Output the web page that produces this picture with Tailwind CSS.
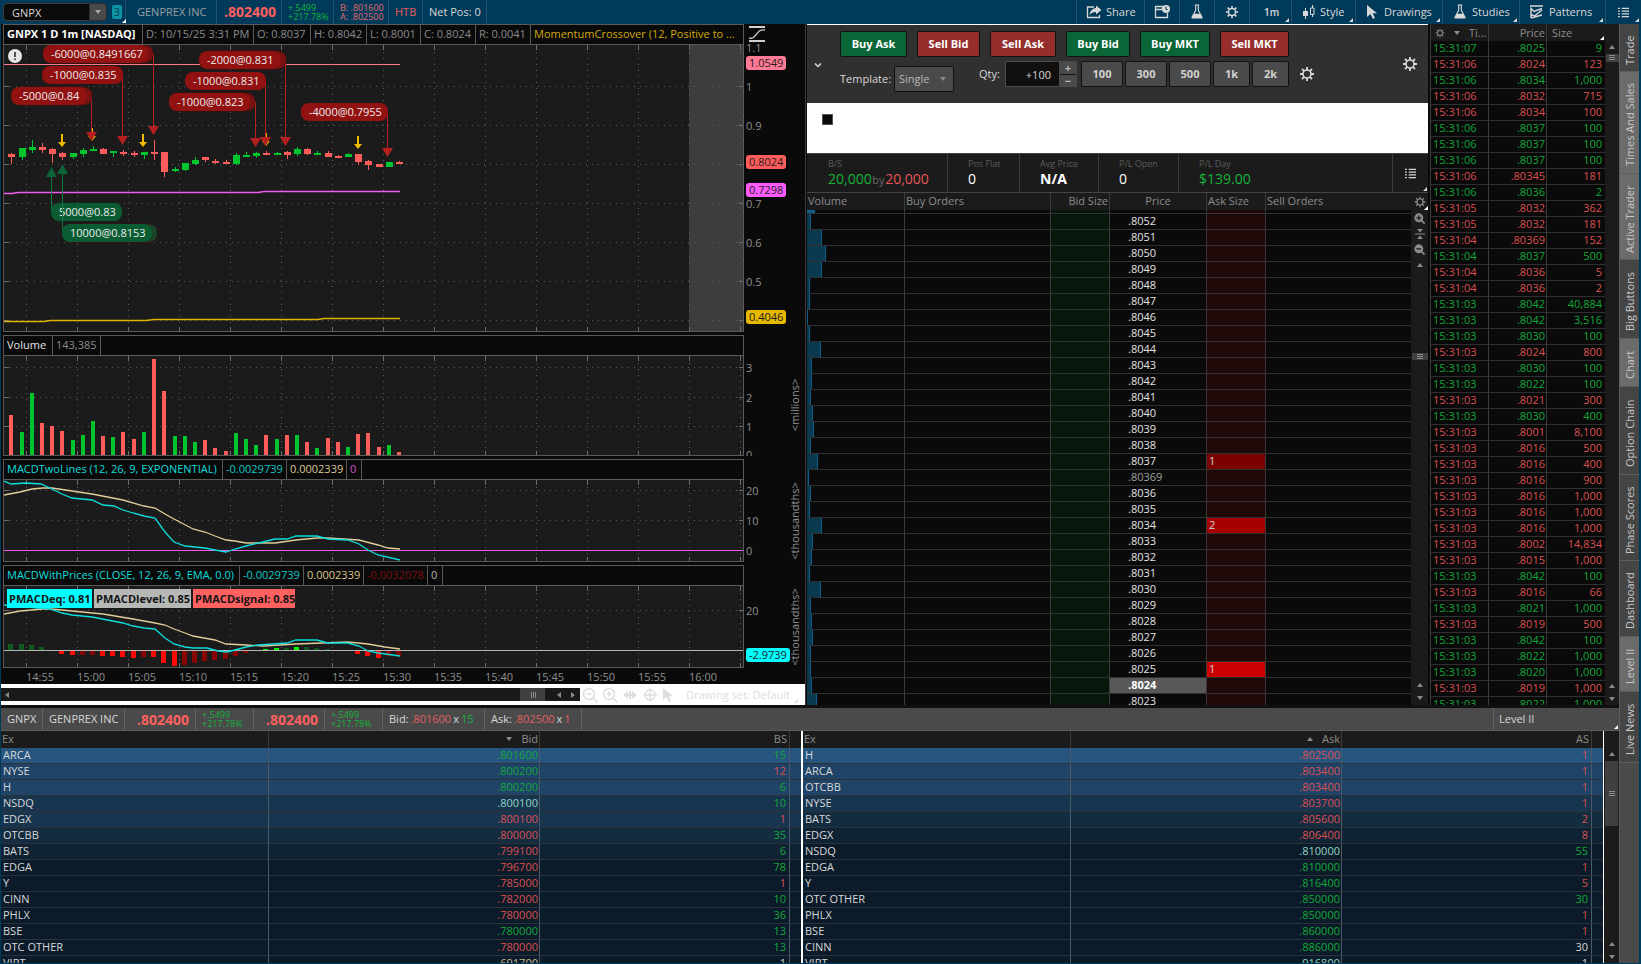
<!DOCTYPE html>
<html lang="en">
<head>
  <meta charset="UTF-8" />
  <meta name="viewport" content="width=device-width, initial-scale=1" />
  <title>GNPX - Active Trader</title>
  <script src="https://cdn.jsdelivr.net/npm/@tailwindcss/browser@4"></script>
</head>
<body class="h-screen overflow-hidden flex flex-col bg-[#003a5a] text-[#d8d8d8] text-[11px] leading-4 font-['Open_Sans',sans-serif]">

  <!-- icon set -->
  <svg class="hidden">
    <symbol id="gear" viewBox="0 0 16 16">
      <circle cx="8" cy="8" r="4" fill="none" stroke="currentColor" stroke-width="1.6" />
      <path d="M8 1v3M8 12v3M1 8h3M12 8h3M3 3l2.2 2.2M10.800 10.800L13 13M13 3l-2.200 2.200M5.200 10.800L3 13" stroke="currentColor" stroke-width="1.800" />
    </symbol>
    <symbol id="flask" viewBox="0 0 16 18">
      <path d="M5.500 1h5M6.500 1v6L2.500 14.500h11L9.500 7V1" fill="none" stroke="currentColor" stroke-width="1.300" />
      <path d="M4.500 11h7l3 5.500h-13z" fill="currentColor" />
    </symbol>
    <symbol id="list" viewBox="0 0 12 12">
      <path d="M0 1.500h2M4 1.500h8M0 4.500h2M4 4.500h8M0 7.500h2M4 7.500h8M0 10.500h2M4 10.500h8" stroke="currentColor" stroke-width="1.400" />
    </symbol>
    <symbol id="up" viewBox="0 0 6 4"><path d="M3 0l3 4H0z" fill="currentColor" /></symbol>
    <symbol id="down" viewBox="0 0 6 4"><path d="M0 0h6L3 4z" fill="currentColor" /></symbol>
    <symbol id="left" viewBox="0 0 4 6"><path d="M4 0v6L0 3z" fill="currentColor" /></symbol>
    <symbol id="right" viewBox="0 0 4 6"><path d="M0 0v6l4-3z" fill="currentColor" /></symbol>
    <symbol id="corner" viewBox="0 0 4 4"><path d="M4 0v4H0z" fill="currentColor" /></symbol>
    <symbol id="grip" viewBox="0 0 6 6"><path d="M0 .5h6M0 2.500h6M0 4.500h6" stroke="currentColor" /></symbol>
    <symbol id="zoomin" viewBox="0 0 16 16">
      <circle cx="7" cy="7" r="5.500" fill="none" stroke="currentColor" stroke-width="1.500" />
      <path d="M11 11l4.500 4.500M4.500 7h5M7 4.500v5" stroke="currentColor" stroke-width="1.500" />
    </symbol>
    <symbol id="zoomout" viewBox="0 0 16 16">
      <circle cx="7" cy="7" r="5.500" fill="none" stroke="currentColor" stroke-width="1.500" />
      <path d="M11 11l4.500 4.500M4.500 7h5" stroke="currentColor" stroke-width="1.500" />
    </symbol>
    <symbol id="zoominfill" viewBox="0 0 16 16">
      <circle cx="7" cy="7" r="6.500" fill="currentColor" />
      <path d="M11 11l4.500 4.500" stroke="currentColor" stroke-width="2.500" /><path d="M3.500 7h7M7 3.500v7" stroke="#1b1b1b" stroke-width="1.800" />
    </symbol>
    <symbol id="zoomoutfill" viewBox="0 0 16 16">
      <circle cx="7" cy="7" r="6.500" fill="currentColor" />
      <path d="M11 11l4.500 4.500" stroke="currentColor" stroke-width="2.500" /><path d="M3.500 7h7" stroke="#1b1b1b" stroke-width="1.800" />
    </symbol>
    <symbol id="pointer" viewBox="0 0 12 16"><path d="M1 1v12l3.500-3 2.500 5 2-1-2.300-4.800H11z" fill="currentColor" /></symbol>
  </svg>

  <header class="h-6 shrink-0 flex items-stretch">
    <div class="flex items-center pl-[3px] w-[126px] border-r border-[#24536b]">
      <label class="sr-only" for="symbol">Symbol</label>
      <input id="symbol" value="GNPX" class="w-[86px] h-[18px] pl-2 bg-[#0b0b0b] border border-r-0 border-[#3c3c3c] rounded-l-sm text-[#d8d8d8]" />
      <button aria-label="Symbol list" class="w-[18px] h-[18px] bg-[#4a4a4a] border border-[#2c2c2c] rounded-r-sm flex items-center justify-center text-[#a8a8a8]"><svg class="w-2 h-1"><use href="#down" /></svg></button>
      <button class="relative ml-[5px] w-[10px] h-[14px] bg-[#0e93a5] text-[#003a4a] leading-[14px] rounded-xs">3<svg class="absolute -right-1 -bottom-1 w-1 h-1 text-white"><use href="#corner" /></svg></button>
    </div>
    <div class="flex items-center w-[91px] pl-[11px] border-r border-[#24536b] text-[#97a0a5]">GENPREX INC</div>
    <div class="flex items-center w-[65px] pl-[7px] border-r border-[#24536b] text-sm font-bold text-[#ff5f5f]">.802400</div>
    <div class="flex flex-col justify-center w-[52px] pl-[6px] border-r border-[#24536b] text-[9px] leading-[9px] text-[#14b33b]"><span>+.5499</span><span>+217.78%</span></div>
    <div class="flex flex-col justify-center w-[55px] pl-[6px] border-r border-[#24536b] text-[9px] leading-[9px] text-[#e06a6a]"><span>B: .801600</span><span>A: .802500</span></div>
    <div class="flex items-center w-[34px] pl-[6px] border-r border-[#24536b] text-[#e85a5a]">HTB</div>
    <div class="flex items-center w-[64px] pl-[6px] border-r border-[#24536b]">Net Pos: 0</div>
    <div class="flex-1"></div>
    <button class="flex items-center gap-1 w-[68px] pl-[9px] border-l border-[#24536b]">
      <svg class="w-4 h-4" viewBox="0 0 16 16"><path d="M8 3H1.500v10.500h12V11" fill="none" stroke="currentColor" stroke-width="1.300" /><path d="M10 1.500L15.500 6 10 10.500V8C7 8 5 9 3.500 11 4 7 6.500 4.500 10 4z" fill="currentColor" /></svg>Share
    </button>
    <button aria-label="Calendar" class="flex items-center justify-center w-[35px] border-l border-[#24536b]">
      <svg class="w-4 h-4" viewBox="0 0 16 16"><path d="M9 2.500H1.500v11h12V9M1.500 5.500H8" fill="none" stroke="currentColor" stroke-width="1.300" /><circle cx="12" cy="5" r="4" fill="currentColor" /><path d="M12 2.500V5.500h1.500" stroke="#003a5a" fill="none" /></svg>
    </button>
    <button aria-label="Analyze" class="flex items-center justify-center w-[35px] border-l border-[#24536b]"><svg class="w-[14px] h-4"><use href="#flask" /></svg></button>
    <button aria-label="Settings" class="flex items-center justify-center w-[35px] border-l border-[#24536b]"><svg class="w-[14px] h-[14px]"><use href="#gear" /></svg></button>
    <button class="relative flex items-center w-[42px] pl-[14px] border-l border-[#24536b] font-semibold text-[10px]">1m<svg class="absolute right-[2px] bottom-[2px] w-1 h-1"><use href="#corner" /></svg></button>
    <button class="relative flex items-center gap-[5px] w-[64px] pl-[11px] border-l border-[#24536b]">
      <svg class="w-3 h-[14px]" viewBox="0 0 12 14"><path d="M2.500 3v11M9.500 0v12" stroke="currentColor" /><path d="M0 6h5v5H0z" fill="currentColor" /><path d="M7.500 3h3.500v6.500H7.500z" fill="#003a5a" stroke="currentColor" /></svg>Style<svg class="absolute right-[2px] bottom-[2px] w-1 h-1"><use href="#corner" /></svg>
    </button>
    <button class="relative flex items-center gap-[6px] w-[87px] pl-[10px] border-l border-[#24536b]"><svg class="w-3 h-4"><use href="#pointer" /></svg>Drawings<svg class="absolute right-[2px] bottom-[2px] w-1 h-1"><use href="#corner" /></svg></button>
    <button class="relative flex items-center gap-[5px] w-[77px] pl-[10px] border-l border-[#24536b]"><svg class="w-[14px] h-4"><use href="#flask" /></svg>Studies<svg class="absolute right-[2px] bottom-[2px] w-1 h-1"><use href="#corner" /></svg></button>
    <button class="relative flex items-center gap-[5px] w-[86px] pl-[10px] border-l border-[#24536b]">
      <svg class="w-[14px] h-[14px]" viewBox="0 0 14 14"><path d="M0 1h13M1 13V3.500l3 3 8-3M1 9.500l3.500 1.500L12 5M1 13l11-3" fill="none" stroke="currentColor" stroke-width="1.400" /></svg>Patterns<svg class="absolute right-[2px] bottom-[2px] w-1 h-1"><use href="#corner" /></svg>
    </button>
    <button aria-label="Menu" class="relative flex items-center w-[36px] pl-[12px] border-l border-[#24536b]"><svg class="w-[11px] h-[11px]"><use href="#list" /></svg><svg class="absolute right-[2px] bottom-[2px] w-1 h-1"><use href="#corner" /></svg></button>
  </header>

  <div class="flex-1 min-h-0 flex pl-px pr-[2px] pb-px">
    <main class="flex-1 min-w-0 flex flex-col bg-[#0a0a0a]">
      <div class="flex-1 min-h-0 grid grid-cols-[minmax(0,805fr)_minmax(0,624fr)_189px] grid-rows-[minmax(0,1fr)] border-b-[3px] border-[#101010]">

        <!-- charts -->
        <section class="flex flex-col border-r border-[#3c3c3c]">
          <div class="flex-1 min-h-0 flex flex-col gap-[3px] pl-[2px]">
            <div class="flex-1 min-h-0 flex">
              <div class="flex-1 min-w-0 flex flex-col border border-[#5a5a5a] bg-[#1b1b1b]">
                <div class="h-5 shrink-0 flex bg-[#0a0a0a] border-b border-[#5a5a5a] text-[#8b8b8b] leading-[18px] whitespace-nowrap overflow-hidden">
                  <span class="w-[138px] pl-[3px] font-bold text-white">GNPX 1 D 1m [NASDAQ]</span>
                  <span class="w-[111px] pl-[3px] border-l border-[#5a5a5a]">D: 10/15/25 3:31 PM</span>
                  <span class="w-[57px] pl-[3px] border-l border-[#5a5a5a]">O: 0.8037</span>
                  <span class="w-[56px] pl-[3px] border-l border-[#5a5a5a]">H: 0.8042</span>
                  <span class="w-[54px] pl-[3px] border-l border-[#5a5a5a]">L: 0.8001</span>
                  <span class="w-[55px] pl-[3px] border-l border-[#5a5a5a]">C: 0.8024</span>
                  <span class="w-[55px] pl-[3px] border-l border-[#5a5a5a]">R: 0.0041</span>
                  <span class="flex-1 pl-[3px] border-l border-[#5a5a5a] text-[#d3a90c]">MomentumCrossover (12, Positive to ...</span>
                </div>
                <svg id="pricePlot" class="w-full flex-1 min-h-0"></svg>
              </div>
              <svg id="priceAxis" class="w-[61px] h-full"></svg>
            </div>
            <div class="h-[121px] shrink-0 flex">
              <div class="flex-1 min-w-0 flex flex-col border border-[#5a5a5a] bg-[#1b1b1b]">
                <div class="h-5 shrink-0 flex bg-[#0a0a0a] border-b border-[#5a5a5a] text-[#8b8b8b] leading-[18px]">
                  <span class="w-[48px] pl-[3px] text-[#e4e4e4]">Volume</span>
                  <span class="w-[49px] pl-[3px] border-x border-[#5a5a5a]">143,385</span>
                </div>
                <svg id="volumePlot" class="w-full flex-1 min-h-0"></svg>
              </div>
              <svg id="volumeAxis" class="w-[61px] h-full"></svg>
            </div>
            <div class="h-[103px] shrink-0 flex">
              <div class="flex-1 min-w-0 flex flex-col border border-[#5a5a5a] bg-[#1b1b1b]">
                <div class="h-5 shrink-0 flex bg-[#0a0a0a] border-b border-[#5a5a5a] leading-[18px] whitespace-nowrap">
                  <span class="w-[218px] pl-[3px] text-[#0bdede]">MACDTwoLines (12, 26, 9, EXPONENTIAL)</span>
                  <span class="w-[64px] pl-[3px] border-l border-[#5a5a5a] text-[#0bc6c6]">-0.0029739</span>
                  <span class="w-[60px] pl-[3px] border-l border-[#5a5a5a] text-[#dcc795]">0.0002339</span>
                  <span class="w-[16px] pl-[3px] border-x border-[#5a5a5a] text-[#d455d4]">0</span>
                </div>
                <svg id="macdPlot" class="w-full flex-1 min-h-0"></svg>
              </div>
              <svg id="macdAxis" class="w-[61px] h-full"></svg>
            </div>
            <div class="h-[103px] shrink-0 flex">
              <div class="flex-1 min-w-0 flex flex-col border border-[#5a5a5a] bg-[#1b1b1b]">
                <div class="h-5 shrink-0 flex bg-[#0a0a0a] border-b border-[#5a5a5a] leading-[18px] whitespace-nowrap">
                  <span class="w-[235px] pl-[3px] text-[#0bdede]">MACDWithPrices (CLOSE, 12, 26, 9, EMA, 0.0)</span>
                  <span class="w-[64px] pl-[3px] border-l border-[#5a5a5a] text-[#0bc6c6]">-0.0029739</span>
                  <span class="w-[60px] pl-[3px] border-l border-[#5a5a5a] text-[#dcc795]">0.0002339</span>
                  <span class="w-[64px] pl-[3px] border-l border-[#5a5a5a] text-[#7a1010]">-0.0032078</span>
                  <span class="w-[16px] pl-[3px] border-x border-[#5a5a5a] text-[#b4b4b4]">0</span>
                </div>
                <div class="relative flex-1 min-h-0">
                  <svg id="pricesPlot" class="w-full h-full"></svg>
                  <div class="absolute left-[3px] top-[3px] flex gap-[2px] font-bold leading-[19px] text-[#141414] whitespace-nowrap">
                    <span class="w-[85px] pl-[2px] bg-[#00ffff]">PMACDeq: 0.81</span>
                    <span class="w-[97px] pl-[2px] bg-[#b6b8b6]">PMACDlevel: 0.85</span>
                    <span class="w-[102px] pl-[2px] bg-[#ff6060]">PMACDsignal: 0.85</span>
                  </div>
                </div>
              </div>
              <svg id="pricesAxis" class="w-[61px] h-full"></svg>
            </div>
          </div>
          <svg id="timeAxis" class="w-full h-4 shrink-0"></svg>
          <div class="h-[21px] shrink-0 flex items-center bg-white text-[#dedede]">
            <div class="flex-1 h-[13px] flex items-center bg-[#191919] text-[#8a8a8a]">
              <svg class="w-1 h-[6px] ml-1"><use href="#left" /></svg>
              <div class="flex-1"></div>
              <div class="w-[25px] h-[13px] bg-[#404040] flex items-center justify-center"><svg class="w-[6px] h-[6px] rotate-90"><use href="#grip" /></svg></div>
              <svg class="w-1 h-[6px] ml-3"><use href="#left" /></svg>
              <svg class="w-1 h-[6px] ml-[10px] mr-[5px]"><use href="#right" /></svg>
            </div>
            <div class="w-[225px] shrink-0 flex items-center gap-1 pl-[2px]">
              <button aria-label="Zoom out"><svg class="w-4 h-4"><use href="#zoomout" /></svg></button>
              <button aria-label="Zoom in"><svg class="w-4 h-4"><use href="#zoomin" /></svg></button>
              <button aria-label="Fit width"><svg class="w-4 h-4" viewBox="0 0 16 16"><path d="M1 8l5-4v8zM15 8l-5-4v8z" fill="currentColor" /><path d="M5 8h6M8 4v8" stroke="currentColor" stroke-width="2" /></svg></button>
              <button aria-label="Crosshair"><svg class="w-4 h-4" viewBox="0 0 16 16"><circle cx="8" cy="8" r="5" fill="none" stroke="currentColor" stroke-width="1.300" /><path d="M8 1v14M1 8h14" stroke="currentColor" stroke-width="1.300" /></svg></button>
              <button aria-label="Pointer"><svg class="w-3 h-4"><use href="#pointer" /></svg></button>
              <button class="ml-2 whitespace-nowrap">Drawing set: Default</button>
              <svg class="w-1 h-1 mt-3"><use href="#corner" /></svg>
            </div>
          </div>
        </section>

        <!-- order entry and ladder -->
        <section class="flex flex-col min-w-0 min-h-0 ml-px mr-[2px] border-t border-white">
          <div class="h-[78px] shrink-0 flex bg-[#303030]">
            <button aria-label="Collapse" class="w-[22px] flex items-center justify-center mt-px"><svg class="w-2 h-2" viewBox="0 0 8 8"><path d="M1 2.500l3 3 3-3" fill="none" stroke="#d8d8d8" stroke-width="1.500" /></svg></button>
            <div class="flex-1 pl-[11px] pt-[6px]">
              <div class="flex gap-[10px] font-bold text-white">
                <button class="w-[67px] h-[26px] rounded-xs border border-[#111] bg-[#0b6637]">Buy Ask</button>
                <button class="w-[63px] h-[26px] rounded-xs border border-[#111] bg-[#962e2e]">Sell Bid</button>
                <button class="w-[66px] h-[26px] rounded-xs border border-[#111] bg-[#962e2e]">Sell Ask</button>
                <button class="w-[64px] h-[26px] rounded-xs border border-[#111] bg-[#0b6637]">Buy Bid</button>
                <button class="w-[70px] h-[26px] rounded-xs border border-[#111] bg-[#0b6637]">Buy MKT</button>
                <button class="w-[69px] h-[26px] rounded-xs border border-[#111] bg-[#962e2e]">Sell MKT</button>
              </div>
              <div class="flex items-start mt-1">
                <div class="flex items-center mt-[5px]">
                  <label for="template" class="w-[54px]">Template:</label>
                  <div class="relative">
                    <select id="template" class="appearance-none w-[60px] h-[26px] pl-1 bg-[#4a4a4a] border border-[#111] rounded-xs text-[#b8b8b8]"><option>Single</option></select>
                    <svg class="absolute right-[7px] top-[11px] w-2 h-1 text-[#8a8a8a]"><use href="#down" /></svg>
                  </div>
                </div>
                <label for="qty" class="w-[51px] pl-[25px] leading-[26px]">Qty:</label>
                <input id="qty" value="+100" class="w-[54px] h-[26px] bg-[#11100f] border border-r-0 border-[#4a4a4a] text-right pr-2" />
                <div class="w-[18px] h-[26px] flex flex-col gap-px border border-[#4a4a4a] bg-[#111] text-[#b4b4b4] font-bold leading-[11px] mr-1">
                  <button class="flex-1 bg-[#4a4a4a]" aria-label="Increase">+</button>
                  <button class="flex-1 bg-[#4a4a4a]" aria-label="Decrease">−</button>
                </div>
                <div class="flex gap-[2px] font-bold text-[#d2d2d2]">
                  <button class="w-[42px] h-[26px] rounded-xs border border-[#111] bg-[#4a4a4a]">100</button>
                  <button class="w-[42px] h-[26px] rounded-xs border border-[#111] bg-[#4a4a4a]">300</button>
                  <button class="w-[42px] h-[26px] rounded-xs border border-[#111] bg-[#4a4a4a]">500</button>
                  <button class="w-[37px] h-[26px] rounded-xs border border-[#111] bg-[#4a4a4a]">1k</button>
                  <button class="w-[37px] h-[26px] rounded-xs border border-[#111] bg-[#4a4a4a]">2k</button>
                </div>
                <button aria-label="Quantity settings" class="ml-[10px] mt-[5px]"><svg class="w-4 h-4"><use href="#gear" /></svg></button>
              </div>
            </div>
            <button aria-label="Panel settings" class="w-[26px] flex items-center"><svg class="w-4 h-4"><use href="#gear" /></svg></button>
          </div>
          <div class="h-[50px] shrink-0 bg-white pl-[15px] pt-[11px]"><div class="w-[11px] h-[11px] bg-[#0a0a0a] border border-[#555]"></div></div>
          <dl class="h-[40px] shrink-0 flex bg-[#1b1b1b] border-y border-[#444]">
            <div class="w-[141px] pl-[21px] pt-[2px] border-r border-[#3a3a3a]"><dt class="text-[9px] text-[#5c5c5c]">B/S</dt><dd class="text-sm leading-[14px] text-[#14b33b]">20,000 <span class="text-[11px] text-[#6a6a6a] -mx-[3px]">by</span> <span class="text-[#e85454]">20,000</span></dd></div>
            <div class="w-[72px] pl-[20px] pt-[2px] border-r border-[#3a3a3a]"><dt class="text-[9px] text-[#5c5c5c]">Pos Flat</dt><dd class="text-sm leading-[14px] text-white">0</dd></div>
            <div class="w-[79px] pl-[20px] pt-[2px] border-r border-[#3a3a3a]"><dt class="text-[9px] text-[#5c5c5c]">Avg Price</dt><dd class="text-sm leading-[14px] text-white font-bold">N/A</dd></div>
            <div class="w-[80px] pl-[20px] pt-[2px] border-r border-[#3a3a3a]"><dt class="text-[9px] text-[#5c5c5c]">P/L Open</dt><dd class="text-sm leading-[14px] text-white">0</dd></div>
            <div class="flex-1 pl-[20px] pt-[2px]"><dt class="text-[9px] text-[#5c5c5c]">P/L Day</dt><dd class="text-sm leading-[14px] text-[#14b33b]">$139.00</dd></div>
            <div class="relative w-[36px] border-l border-[#3a3a3a] flex items-center pl-3"><svg class="w-[11px] h-[11px]"><use href="#list" /></svg><svg class="absolute right-px bottom-px w-1 h-1"><use href="#corner" /></svg></div>
          </dl>
          <div class="flex-1 min-h-0 flex">
            <div class="flex-1 min-w-0 overflow-hidden">
              <table class="table-fixed w-full border-separate border-spacing-0">
                <thead class="bg-[#1b1b1b] text-[#8b8b8b] leading-[15px]">
                  <tr class="h-[17px]">
                    <th class="w-[98px] pl-px align-top text-left font-normal border-r border-[#3a3a3a]">Volume</th>
                    <th class="w-[146px] pl-px align-top text-left font-normal border-r border-[#3a3a3a]">Buy Orders</th>
                    <th class="w-[59px] pr-px align-top text-right font-normal border-r border-[#3a3a3a]">Bid Size</th>
                    <th class="w-[97px] align-top text-center font-normal border-r border-[#3a3a3a]">Price</th>
                    <th class="w-[59px] pl-px align-top text-left font-normal border-r border-[#3a3a3a] whitespace-nowrap">Ask Size</th>
                    <th class="pl-px align-top text-left font-normal">Sell Orders</th>
                  </tr>
                </thead>
                <tbody id="ladder"></tbody>
              </table>
            </div>
            <div class="w-[17px] shrink-0 flex flex-col items-center bg-[#1b1b1b] text-[#8a8a8a]">
              <div class="relative w-[17px] h-[17px] flex items-center justify-center"><svg class="w-3 h-3"><use href="#gear" /></svg><svg class="absolute right-0 bottom-0 w-1 h-1 text-white"><use href="#corner" /></svg></div>
              <svg class="w-[11px] h-[11px] mt-[3px]"><use href="#zoominfill" /></svg>
              <svg class="w-[10px] h-[12px] mt-1" viewBox="0 0 10 12"><path d="M0 6h10" stroke="currentColor" /><path d="M2 1h6L5 4.500zM2 11h6L5 7.500z" fill="currentColor" /></svg>
              <svg class="w-[11px] h-[11px] mt-1"><use href="#zoomoutfill" /></svg>
              <svg class="w-[6px] h-1 mt-2"><use href="#up" /></svg>
              <div class="w-4 h-[7px] mt-[86px] bg-[#404040] flex items-center justify-center"><svg class="w-[6px] h-[6px]"><use href="#grip" /></svg></div>
              <div class="flex-1"></div>
              <svg class="w-[6px] h-1 mb-[9px]"><use href="#up" /></svg>
              <svg class="w-[6px] h-1 mb-[5px]"><use href="#down" /></svg>
            </div>
          </div>
        </section>

        <!-- time and sales -->
        <section class="flex min-h-0 border-l border-[#3c3c3c]">
          <div class="flex-1 min-w-0 overflow-hidden">
            <table class="table-fixed w-full border-separate border-spacing-0">
              <thead class="bg-[#1b1b1b] text-[#8b8b8b]">
                <tr class="h-[17px]">
                  <th class="w-[58px] font-normal border-r border-[#3a3a3a]"><div class="flex items-center pl-1"><svg class="w-[10px] h-[10px]"><use href="#gear" /></svg><svg class="w-[6px] h-1 ml-[9px] mr-[9px]"><use href="#down" /></svg>Ti...</div></th>
                  <th class="w-[58px] pr-px text-right font-normal border-r border-[#3a3a3a]">Price</th>
                  <th class="relative pl-[5px] text-left font-normal">Size<svg class="absolute right-px bottom-px w-1 h-1 text-white"><use href="#corner" /></svg></th>
                </tr>
              </thead>
              <tbody id="sales"></tbody>
            </table>
          </div>
          <div class="w-[14px] shrink-0 flex flex-col items-center bg-[#1b1b1b] text-[#8a8a8a]">
            <svg class="w-[6px] h-1 mt-[21px]"><use href="#up" /></svg>
            <div class="w-[13px] h-2 mt-[5px] bg-[#404040] flex items-center justify-center"><svg class="w-[6px] h-[6px]"><use href="#grip" /></svg></div>
            <div class="flex-1"></div>
            <svg class="w-[6px] h-1 mb-[9px]"><use href="#up" /></svg>
            <svg class="w-[6px] h-1 mb-1"><use href="#down" /></svg>
          </div>
        </section>
      </div>

      <!-- level II -->
      <section class="h-[255px] shrink-0 flex flex-col">
        <div class="h-[23px] shrink-0 flex bg-[#4a4a4a] leading-[22px] border-b border-[#5c5c5c]">
          <span class="w-[42px] pl-[6px] border-r border-[#636363]">GNPX</span>
          <span class="w-[82px] pl-[6px] border-r border-[#636363] whitespace-nowrap">GENPREX INC</span>
          <span class="w-[71px] pl-3 border-r border-[#636363] text-sm leading-[24px] font-bold text-[#ff5f5f]">.802400</span>
          <span class="w-[58px] pl-[6px] pt-[2px] border-r border-[#636363] text-[9px] leading-[9px] text-[#14b33b]">+.5499<br>+217.78%</span>
          <span class="w-[71px] pl-3 border-r border-[#636363] text-sm leading-[24px] font-bold text-[#ff5f5f]">.802400</span>
          <span class="w-[58px] pl-[6px] pt-[2px] border-r border-[#636363] text-[9px] leading-[9px] text-[#14b33b]">+.5499<br>+217.78%</span>
          <span class="w-[102px] flex gap-[2px] pl-[6px] border-r border-[#636363] whitespace-nowrap">Bid: <span class="text-[#e06060]">.801600</span> x <span class="text-[#14b33b]">15</span></span>
          <span class="w-[97px] flex gap-[2px] pl-[6px] border-r border-[#636363] whitespace-nowrap">Ask: <span class="text-[#e06060]">.802500</span> x <span class="text-[#e06060]">1</span></span>
          <span class="flex-1"></span>
          <button class="relative w-[126px] pl-[5px] text-left border-l border-[#636363]">Level II<svg class="absolute right-px bottom-px w-1 h-1 text-white"><use href="#corner" /></svg></button>
        </div>
        <div class="flex-1 min-h-0 flex">
          <div class="flex-1 min-w-0 overflow-hidden border-r-2 border-white">
            <table class="table-fixed w-full border-separate border-spacing-0">
              <thead class="bg-[#1b1b1b] text-[#8b8b8b] leading-[15px]">
                <tr class="h-[17px]">
                  <th class="w-[268px] pl-px align-top text-left font-normal border-r border-[#3a3a3a]">Ex</th>
                  <th class="w-[271px] pr-px align-top font-normal border-r border-[#3a3a3a]"><div class="flex items-center justify-end gap-[9px]"><svg class="w-[6px] h-1"><use href="#down" /></svg>Bid</div></th>
                  <th class="pr-[2px] align-top text-right font-normal border-r border-[#3a3a3a]">BS</th>
                  <th class="w-[11px]"></th>
                </tr>
              </thead>
              <tbody id="bids"></tbody>
            </table>
          </div>
          <div class="flex-1 min-w-0 overflow-hidden border-r border-white">
            <table class="table-fixed w-full border-separate border-spacing-0">
              <thead class="bg-[#1b1b1b] text-[#8b8b8b] leading-[15px]">
                <tr class="h-[17px]">
                  <th class="w-[268px] pl-px align-top text-left font-normal border-r border-[#3a3a3a]">Ex</th>
                  <th class="w-[271px] pr-px align-top font-normal border-r border-[#3a3a3a]"><div class="flex items-center justify-end gap-[9px]"><svg class="w-[6px] h-1"><use href="#up" /></svg>Ask</div></th>
                  <th class="pr-[2px] align-top text-right font-normal border-r border-[#3a3a3a]">AS</th>
                  <th class="w-[11px]"></th>
                </tr>
              </thead>
              <tbody id="asks"></tbody>
            </table>
          </div>
          <div class="w-[15px] shrink-0 flex flex-col items-center bg-[#1b1b1b] text-[#8a8a8a]">
            <svg class="w-[6px] h-1 mt-[21px]"><use href="#up" /></svg>
            <div class="w-[13px] h-[65px] mt-[5px] bg-[#404040] flex items-center justify-center"><svg class="w-[6px] h-[6px]"><use href="#grip" /></svg></div>
            <div class="flex-1"></div>
            <svg class="w-[6px] h-1 mb-[9px]"><use href="#up" /></svg>
            <svg class="w-[6px] h-1 mb-1"><use href="#down" /></svg>
          </div>
        </div>
      </section>
    </main>

    <!-- gadget tabs -->
    <nav class="w-5 shrink-0 flex flex-col bg-[#4a4a4a] border-l border-[#5e5e5e] text-[#c8c8c8]">
      <button class="h-12 pb-[5px] [writing-mode:vertical-rl] rotate-180 leading-5 border-t border-[#5e5e5e] bg-[#454545]">Trade</button>
      <button class="h-[102px] pb-[5px] [writing-mode:vertical-rl] rotate-180 leading-5 border-t border-[#5e5e5e] bg-[#6b6b6b]">Times And Sales</button>
      <button class="h-[86px] pb-[5px] [writing-mode:vertical-rl] rotate-180 leading-5 border-t border-[#5e5e5e] bg-[#6b6b6b]">Active Trader</button>
      <button class="h-[79px] pb-[5px] [writing-mode:vertical-rl] rotate-180 leading-5 border-t border-[#5e5e5e] bg-[#454545]">Big Buttons</button>
      <button class="h-12 pb-[5px] [writing-mode:vertical-rl] rotate-180 leading-5 border-t border-[#5e5e5e] bg-[#6b6b6b]">Chart</button>
      <button class="h-[88px] pb-[5px] [writing-mode:vertical-rl] rotate-180 leading-5 border-t border-[#5e5e5e] bg-[#454545]">Option Chain</button>
      <button class="h-[86px] pb-[5px] [writing-mode:vertical-rl] rotate-180 leading-5 border-t border-[#5e5e5e] bg-[#454545]">Phase Scores</button>
      <button class="h-[76px] pb-[5px] [writing-mode:vertical-rl] rotate-180 leading-5 border-t border-[#5e5e5e] bg-[#454545]">Dashboard</button>
      <button class="h-[55px] pb-[5px] [writing-mode:vertical-rl] rotate-180 leading-5 border-t border-[#5e5e5e] bg-[#6b6b6b]">Level II</button>
      <button class="h-[71px] pb-[5px] [writing-mode:vertical-rl] rotate-180 leading-5 border-t border-[#5e5e5e] bg-[#454545]">Live News</button>
    </nav>
  </div>

  <script>
    const GREEN = "#00c52f", RED = "#ff5c5c";
    const el = id => document.getElementById(id);

    // one entry per minute: colour, high, body top, body bottom, low, volume bar height
    const candles = [
      ["r",153,154,157,164,40],["g",148,148,157,160,23],["g",140,147,150,153,62],["r",143,147,150,153,32],
      ["r",148,149,154,163,29],["r",152,153,157,160,24],["g",153,153,157,159,15],["g",148,150,154,157,20],
      ["g",146,149,151,151,34],["r",148,149,154,154,19],["g",151,151,153,157,18],["r",150,152,154,156,23],
      ["r",151,153,155,157,16],["g",152,152,155,159,23],["r",140,152,154,160,96],["r",152,152,172,177,64],
      ["g",167,169,171,172,19],["g",163,163,170,171,19],["g",157,160,164,165,13],["r",157,157,160,162,15],
      ["r",159,161,163,164,7],["r",160,162,164,164,4],["g",153,155,164,165,22],["g",152,155,157,157,16],
      ["g",152,153,156,158,10],["r",151,153,155,155,20],["g",152,153,155,155,16],["r",151,152,155,159,20],
      ["g",147,149,154,156,20],["r",148,149,154,155,13],["g",151,153,155,155,7],["r",151,153,157,157,17],
      ["r",155,156,158,158,13],["g",153,154,157,157,8],["r",154,154,162,165,21],["r",160,161,165,170,22],
      ["r",164,164,167,167,8],["g",162,162,167,167,10],["r",161,162,164,164,3]
    ];
    const histogram = [6,6,5,3,0,-3,-4,-4,-4,-5,-5,-6,-7,-6,-6,-12,-15,-14,-12,-10,-9,-8,-5,-2,0,1,2,2,3,3,2,1,0,0,-3,-5,-7,-5,-5];
    const strong = [5,6,9,10,11,12,14,15,16,25,26,28,34,35,36];
    const barX = i => Math.round(11.3 + i * 10.2);

    const bubbles = [
      ["-6000@0.8491667",43,45,104,3,153,126],["-1000@0.835",42,66,81,0,122,136],["-5000@0.84",11,87,75,3,91,132],
      ["-2000@0.831",199,51,81,3,285,137],["-1000@0.831",185,72,81,0,265,137],["-1000@0.823",169,93,80,3,255,138],
      ["-4000@0.7955",301,103,87,0,387,148]
    ];
    const buys = [["5000@0.83",51,203,71,0,51,168],["10000@0.8153",62,224,89,3,62,165]];

    function grid(rows, top) {
      let s = "";
      for (let x = 26; x < 3000; x += 51) {
        s += `<path d="M${x + .5} ${top + 1}V2000" stroke="#5c5c5c" stroke-dasharray="1 5"/><path d="M${x + .5} ${top}v5" stroke="#6c6c6c"/>`;
        s += `<svg y="100%" overflow="visible"><path d="M${x + .5} ${top - 4}v4" stroke="#6c6c6c"/></svg>`;
      }
      rows.forEach(y => {
        s += `<path d="M4 ${y + .5}H3000" stroke="#5c5c5c" stroke-dasharray="1 5"/><path d="M4 ${y + .5}h5" stroke="#6c6c6c"/>`;
        s += `<svg x="100%" overflow="visible"><path d="M0 ${y + .5}h4" stroke="#6c6c6c"/></svg>`;
      });
      return s;
    }

    function plot(id, top, body) {
      el(id).innerHTML = `<g transform="translate(-4 -${top})">${body}</g>`;
    }

    function line(points, color) {
      return `<polyline points="${points}" fill="none" stroke="${color}" stroke-width="1.3"/>`;
    }

    function bubble([label, x, y, w, stack, ax, ay], down) {
      const fill = down ? "#921111" : "#0b5c33", edge = down ? "#b81f1f" : "#127a45";
      let s = down
        ? `<path d="M${ax + .5} ${y + 9}V${ay}" stroke="${edge}"/><path d="M${ax - 5} ${ay}h11l-5.500 9z" fill="#b3201f"/>`
        : `<path d="M${ax + .5} ${y + 9}V${ay + 9}" stroke="${edge}"/><path d="M${ax - 5} ${ay + 9}h11l-5.500 -10z" fill="#0d6238"/>`;
      for (let i = stack; i > 0; i--) s += `<rect x="${x + i * 2}" y="${y}" width="${w}" height="18" rx="8" fill="${fill}" stroke="#3a1010" stroke-width=".6"/>`;
      s += `<rect x="${x}" y="${y}" width="${w}" height="18" rx="8" fill="${fill}"/>`;
      return s + `<text x="${x + 8}" y="${y + 13}" fill="#ececec">${label}</text>`;
    }

    const marker = (x, y) => `<path d="M${x - 1} ${y}h2v8h3l-4 5-4-5h3z" fill="#f0bd00"/>`;

    let price = `<rect x="689" y="45" width="3000" height="2000" fill="#3d3d3d"/>` + grid([86,125,164,203,242,281,320], 45);
    price += `<path d="M4 64.500H400" stroke="#ff7a8c"/>`;
    price += line("4,193.5 12,193.5 18,192.500 258,192.500 264,191.500 400,191.500", "#ef5cef");
    price += line("4,321.500 44,321.500 50,320.500 146,320.500 154,319.500 318,319.500 324,318.500 400,318.500", "#e0b400");
    candles.forEach(([c, hi, top, bottom, lo], i) => {
      const x = barX(i), color = c === "g" ? GREEN : RED;
      price += `<path d="M${x + .5} ${hi}V${lo}" stroke="${color}"/><rect x="${x - 3}" y="${top}" width="7" height="${bottom - top}" fill="${color}"/>`;
    });
    price += marker(62, 134) + marker(92, 128) + marker(143, 134) + marker(266, 133) + marker(358, 136);
    bubbles.forEach(b => price += bubble(b, true));
    buys.forEach(b => price += bubble(b, false));
    price += `<circle cx="15" cy="56" r="7" fill="#e6e6e6"/><path d="M15 52v5M15 58.500v1.500" stroke="#222" stroke-width="1.500"/>`;
    plot("pricePlot", 45, price);

    let volume = grid([367,397,426], 356);
    candles.forEach((c, i) => {
      volume += `<rect x="${barX(i) - 2}" y="${455 - c[5]}" width="4" height="${c[5]}" fill="${c[0] === "g" ? GREEN : RED}"/>`;
    });
    plot("volumePlot", 356, volume);

    plot("macdPlot", 480, grid([490,520], 480)
      + `<path d="M4 550.500H3000" stroke="#ef5cef"/>`
      + line("4,495 20,492 32,489 43,488 52,488 72,491 92,494 123,500 144,506 155,508 165,514 174,519 193,529 205,532 215,536 226,540 235,541 246,543 275,543 296,540 317,538 328,538 359,540 378,545 388,548 400,549", "#e0cc98")
      + line("4,481 11,484 26,483 41,484 52,489 62,494 72,498 92,500 103,505 114,506 123,510 133,513 144,516 155,518 165,532 174,542 185,546 205,548 215,550 226,552 235,549 246,546 263,542 275,539 287,539 296,536 317,536 328,539 348,540 359,544 368,550 378,555 400,560", "#0bdede"));

    let prices = grid([610], 586) + `<path d="M4 650.500H3000" stroke="#b4b4b4"/>`;
    histogram.forEach((v, i) => {
      const bright = strong.includes(i);
      const color = v > 0 ? (bright ? "#00ff00" : "#0f5a1c") : (bright ? "#ff0808" : "#860505");
      prices += `<rect x="${barX(i) - 3}" y="${v > 0 ? 650 - v : 651}" width="5" height="${Math.abs(v)}" fill="${color}"/>`;
    });
    prices += line("4,614 20,611 43,609 52,609 72,611 103,614 133,619 155,623 165,625 174,629 185,633 193,636 215,640 226,644 246,645 263,646 296,644 348,642 368,644 385,647 400,649", "#e0cc98");
    prices += line("4,605 50,609 62,613 72,615 92,617 123,623 133,626 144,628 155,629 165,638 174,644 185,647 193,648 207,648 218,651 227,652 235,650 246,647 258,645 287,643 296,640 317,640 328,643 348,643 359,646 368,651 378,653 400,656", "#0bdede");
    plot("pricesPlot", 586, prices);

    // y is measured from the top of each panel
    function axis(id, labels, tags, unit, unitY) {
      let s = "";
      labels.forEach(([t, y]) => s += `<text x="2" y="${y + 4}" fill="#8f8f8f">${t}</text>`);
      tags.forEach(([t, y, color, w]) => s += `<rect x="2" y="${y}" width="${w}" height="14" rx="3" fill="${color}"/><text x="5" y="${y + 11}" fill="#1c1c1c">${t}</text>`);
      if (unit) s += `<text transform="translate(55 ${unitY}) rotate(-90)" text-anchor="middle" fill="#8f8f8f">${unit}</text>`;
      el(id).innerHTML = s;
    }
    axis("priceAxis", [["1.1",24],["1",63],["0.9",102],["0.7",180],["0.6",219],["0.5",258]],
      [["1.0549",32,"#ff7a94",40],["0.8024",131,"#ff5c5c",40],["0.7298",159,"#ff5cff",40],["0.4046",286,"#e6b800",40]]);
    el("priceAxis").innerHTML += `<path d="M5 3h16M5 17h16" stroke="#d0d0d0" stroke-width="2"/><path d="M5 14c4 1 5-1 7.500-4S16 5.500 21 6" fill="none" stroke="#c4c4c4" stroke-width="1.300"/>`;
    axis("volumeAxis", [["3",33],["2",63],["1",92],["0",120]], [], "&lt;millions&gt;", 70);
    axis("macdAxis", [["20",32],["10",62],["0",92]], [], "&lt;thousandths&gt;", 62);
    axis("pricesAxis", [["20",46]], [["-2.9739",83,"#00ffff",44]], "&lt;thousandths&gt;", 62);

    el("timeAxis").innerHTML = ["14:55","15:00","15:05","15:10","15:15","15:20","15:25","15:30","15:35","15:40","15:45","15:50","15:55","16:00"]
      .map((t, i) => `<text x="${25 + i * 51}" y="13" fill="#8f8f8f">${t}</text>`).join("");

    // ladder: price, volume bar width, ask size, ask cell colour
    const ladder = [
      [".8052",4],[".8051",15],[".8050",19],[".8049",15],[".8048",3],[".8047",3],[".8046",1],[".8045",3],[".8044",14],
      [".8043",5],[".8042",5],[".8041",4],[".8040",6],[".8039",7],[".8038",4],[".8037",11,"1","#7b0000"],[".80369",2],
      [".8036",4],[".8035",3],[".8034",15,"2","#a60000"],[".8033",6],[".8032",5],[".8031",3],[".8030",14],[".8029",4],
      [".8028",5],[".8027",6],[".8026",4],[".8025",4,"1","#cc0000"],[".8024",5],[".8023",10]
    ];
    const cell = "align-top border-r border-b border-r-[#3a3a3a] border-b-[#303030]";
    el("ladder").innerHTML = `<tr class="h-1">
        <td class="${cell}"><div class="w-2 h-[3px] bg-[#0b5f8a]"></div></td><td class="${cell}"></td>
        <td class="${cell} bg-[#08170b]"></td><td class="${cell}"></td><td class="${cell} bg-[#1f0808]"></td><td class="border-b border-[#303030]"></td>
      </tr>` + ladder.map(([p, w, size, color]) => `
      <tr class="h-4 leading-[13px]">
        <td class="${cell}"><div class="h-[15px] bg-[#0b3a50] border-r border-[#0b5f8a]" style="width:${w}px"></div></td>
        <td class="${cell}"></td>
        <td class="${cell} bg-[#08170b]"></td>
        <td class="${cell} pl-[18px] ${p === ".8024" ? "bg-[#585858] font-bold text-white" : p === ".80369" ? "text-[#a0a0a0]" : "text-[#e4e4e4]"}">${p}</td>
        <td class="${cell} bg-[#1f0808] pl-[2px]" ${color ? `style="background:${color}"` : ""}>${size || ""}</td>
        <td class="border-b border-[#303030]"></td>
      </tr>`).join("");

    const sales = `07 .8025 9 g|06 .8024 123 r|06 .8034 1,000 g|06 .8032 715 r|06 .8034 100 r|06 .8037 100 g|06 .8037 100 g|06 .8037 100 g|06 .80345 181 r|06 .8036 2 g|05 .8032 362 r|05 .8032 181 r|04 .80369 152 r|04 .8037 500 g|04 .8036 5 r|04 .8036 2 r|03 .8042 40,884 g|03 .8042 3,516 g|03 .8030 100 g|03 .8024 800 r|03 .8030 100 g|03 .8022 100 g|03 .8021 300 r|03 .8030 400 g|03 .8001 8,100 r|03 .8016 500 r|03 .8016 400 r|03 .8016 900 r|03 .8016 1,000 r|03 .8016 1,000 r|03 .8016 1,000 r|03 .8002 14,834 r|03 .8015 1,000 r|03 .8042 100 g|03 .8016 66 r|03 .8021 1,000 g|03 .8019 500 r|03 .8042 100 g|03 .8022 1,000 g|03 .8020 1,000 g|03 .8019 1,000 r|03 .8022 1,000 g`;
    const tone = { g: "text-[#12a838]", r: "text-[#dc5050]", w: "text-[#d0d0d0]", c: "text-[#8fd6c4]", t: "text-[#c9b98a]" };
    el("sales").innerHTML = sales.split("|").map(row => {
      const [t, p, s, c] = row.split(" ");
      return `<tr class="h-4 leading-[13px] ${tone[c]}">
        <td class="${cell} pl-[2px]">15:31:${t}</td><td class="${cell} pr-px text-right">${p}</td><td class="align-top border-b border-[#303030] pr-[3px] text-right">${s}</td>
      </tr>`;
    }).join("");

    const shade = ["bg-[#26557f]", "bg-[#1f4468]", "bg-[#18354f]", "bg-[#132c40]", "bg-[#102334]", "bg-[#0c1b29]"];
    const book = (id, rows) => {
      el(id).innerHTML = rows.split("|").map(row => {
        const [ex, p, pc, s, sc, lv] = row.split(",");
        const line = "align-top border-r border-b border-r-[#4a5a66] border-b-[#2c3338]";
        return `<tr class="h-4 leading-[13px] ${shade[lv]}">
          <td class="${line} pl-[2px]">${ex}</td><td class="${line} pr-px text-right ${tone[pc]}">${p}</td>
          <td class="${line} pr-[3px] text-right ${tone[sc]}">${s}</td><td class="border-b border-[#2c3338]"></td>
        </tr>`;
      }).join("");
    };
    book("bids", "ARCA,.801600,g,15,g,0|NYSE,.800200,g,12,r,1|H,.800200,g,6,g,1|NSDQ,.800100,c,10,g,2|EDGX,.800100,r,1,r,2|OTCBB,.800000,r,35,g,3|BATS,.799100,r,6,g,4|EDGA,.796700,r,78,g,5|Y,.785000,r,1,r,5|CINN,.782000,r,10,g,5|PHLX,.780000,r,36,g,5|BSE,.780000,g,13,g,5|OTC OTHER,.780000,r,13,g,5|VIRT,.691700,t,1,w,5");
    book("asks", "H,.802500,r,1,r,0|ARCA,.803400,r,1,r,1|OTCBB,.803400,r,1,r,1|NYSE,.803700,r,1,r,2|BATS,.805600,r,2,r,3|EDGX,.806400,r,8,r,4|NSDQ,.810000,c,55,g,5|EDGA,.810000,g,1,r,5|Y,.816400,g,5,r,5|OTC OTHER,.850000,g,30,g,5|PHLX,.850000,g,1,r,5|BSE,.860000,g,1,r,5|CINN,.886000,g,30,w,5|VIRT,.916800,c,1,w,5");
  </script>
</body>
</html>
